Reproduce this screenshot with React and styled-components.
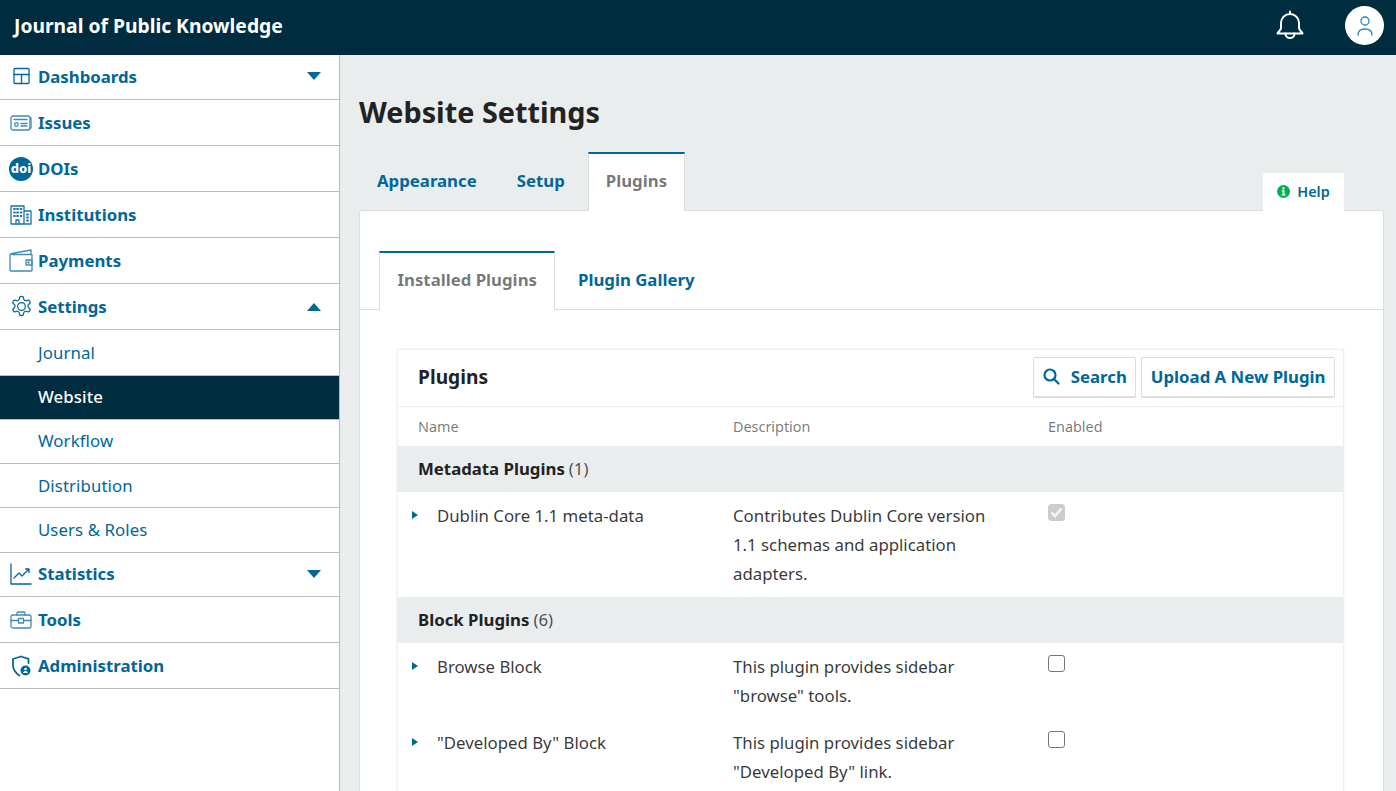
import React from 'react'
import styled, { createGlobalStyle } from 'styled-components'

const GlobalStyle = createGlobalStyle`
  html, body { margin: 0; padding: 0; height: 100%; overflow: hidden; }
  body { font-family: "Noto Sans", "Open Sans", sans-serif; background: #eaedee; color: rgba(0,0,0,.84); }
  * { box-sizing: border-box; }
`

const Page = styled.div`
  width: 1396px;
  height: 791px;
  display: flex;
  flex-direction: column;
  overflow: hidden;
`

const Header = styled.header`
  height: 55px;
  flex: none;
  background: #002c40;
  display: flex;
  align-items: center;
  justify-content: space-between;
  padding: 0 12px 0 14px;
  color: #fff;
`

const Brand = styled.div`
  font-size: 19.3px;
  font-weight: 700;
  position: relative;
  top: -2px;
`

const HeaderTools = styled.div`
  display: flex;
  align-items: center;
  gap: 40px;
  position: relative;
  top: -2px;
`

const Avatar = styled.div`
  width: 39px;
  height: 39px;
  border-radius: 50%;
  background: #fff;
  display: flex;
  align-items: center;
  justify-content: center;
`

const Body = styled.div`
  flex: 1;
  display: flex;
  min-height: 0;
`

const Sidebar = styled.nav`
  width: 340px;
  flex: none;
  background: #fff;
  border-right: 1px solid #bbb;
`

const NavRow = styled.div`
  height: ${p => p.$h || 46}px;
  border-bottom: 1px solid #bbb;
  display: flex;
  align-items: center;
  padding: 0 18px ${p => (p.$h ? 2 : 0)}px 10px;
  color: #006798;
  font-size: 16.8px;
  font-weight: 700;
  gap: 6px;
`

const SubRow = styled.div`
  height: ${p => p.$h || 44}px;
  border-bottom: 1px solid #bbb;
  display: flex;
  align-items: center;
  padding: 0 0 ${p => p.$lift || 0}px 38px;
  font-size: 16.8px;
  font-weight: ${p => (p.$active ? 500 : 400)};
  letter-spacing: 0.1px;
  color: ${p => (p.$active ? '#fff' : '#006798')};
  background: ${p => (p.$active ? '#002c40' : 'transparent')};
`

const NavIcon = styled.span`
  width: 22px;
  height: 24px;
  flex: none;
  display: flex;
  align-items: center;
  justify-content: center;
  svg { flex: none; }
`

const NavLabel = styled.span`
  flex: 1;
`

const Caret = styled.span`
  width: 0;
  height: 0;
  border-left: 7.5px solid transparent;
  border-right: 7.5px solid transparent;
  ${p => (p.$up ? 'border-bottom: 8px solid #006798;' : 'border-top: 8px solid #006798;')}
`

const Main = styled.main`
  flex: 1;
  min-width: 0;
  padding: 37px 12px 0 19px;
`

const Title = styled.h1`
  margin: 0 0 19px;
  height: 40px;
  font-size: 28.8px;
  line-height: 40px;
  font-weight: 700;
  color: #222;
`

const TabBar = styled.div`
  display: flex;
  align-items: flex-end;
  height: ${p => p.$h}px;
  padding-left: ${p => p.$inset || 1}px;
  ${p => p.$bordered && 'border-bottom: 1px solid #ddd;'}
`

const Tab = styled.div`
  height: 59px;
  padding: 0 ${p => p.$pad || 17}px ${p => (p.$active ? 4 : 2)}px;
  margin-bottom: -1px;
  display: flex;
  align-items: center;
  font-size: 16.8px;
  font-weight: 700;
  color: ${p => (p.$active ? 'rgba(0,0,0,.54)' : '#006798')};
  background: ${p => (p.$active ? '#fff' : 'transparent')};
  ${p => p.$active && `
    border: 1px solid #ddd;
    border-top: 2px solid #006798;
    border-bottom: 0;
  `}
  position: relative;
  z-index: 1;
`

const Help = styled.div`
  margin-left: auto;
  margin-right: 40px;
  margin-bottom: -1px;
  width: 81px;
  height: 38px;
  padding-bottom: 2px;
  background: #fff;
  border-radius: 2px 2px 0 0;
  display: flex;
  align-items: center;
  justify-content: center;
  gap: 7px;
  font-size: 14.4px;
  font-weight: 600;
  color: #006798;
  position: relative;
  z-index: 1;
`

const Panel = styled.section`
  background: #fff;
  border: 1px solid #ddd;
  border-radius: 2px;
  height: 620px;
  padding-top: 40px;
`

const Card = styled.div`
  margin: 39px 39px 0 37px;
  border: 1px solid #eee;
  border-bottom: 0;
  box-shadow: 0 0 2px rgba(0,0,0,.08);
`

const CardHead = styled.div`
  height: 57px;
  display: flex;
  align-items: center;
  justify-content: space-between;
  padding: 0 8px 2px 20px;
  border-bottom: 1px solid #eee;
`

const CardTitle = styled.div`
  font-size: 19.2px;
  font-weight: 700;
  color: #222;
  margin-top: -2px;
`

const Buttons = styled.div`
  display: flex;
  gap: 5px;
`

const Button = styled.div`
  height: 41px;
  padding: 0 8.5px;
  display: flex;
  align-items: center;
  gap: 11px;
  border: 1px solid #ddd;
  border-bottom-width: 2px;
  border-radius: 2px;
  background: #fff;
  color: #006798;
  font-size: 16.8px;
  font-weight: 700;
`

const Grid = styled.div`
  display: grid;
  grid-template-columns: 335px 315px 1fr;
`

const ColHead = styled.div`
  height: 39px;
  padding-left: ${p => (p.$first ? 20 : 0)}px;
  display: flex;
  align-items: center;
  font-size: 14.4px;
  color: rgba(0,0,0,.54);
`

const Group = styled.div`
  grid-column: 1 / -1;
  height: 46px;
  padding: 0 0 2px 20px;
  background: #eaedee;
  display: flex;
  align-items: center;
  font-size: 16.8px;
  color: #222;
  b { font-weight: 700; }
  span { margin-left: 4px; color: rgba(0,0,0,.7); }
`

const NameCell = styled.div`
  padding: 9px 0 0 14px;
  display: flex;
  gap: 19px;
  font-size: 16.8px;
  line-height: 29px;
  color: rgba(0,0,0,.8);
`

const Arrow = styled.span`
  width: 0;
  height: 0;
  margin-top: 10px;
  flex: none;
  border-top: 4px solid transparent;
  border-bottom: 4px solid transparent;
  border-left: 6px solid #006798;
`

const DescCell = styled.div`
  padding: 9px 40px 9px 0;
  font-size: 16.8px;
  line-height: 29px;
  color: rgba(0,0,0,.8);
`

const CheckCell = styled.div`
  padding: 12px 0 0 0;
`

const Check = styled.span`
  display: flex;
  width: 17px;
  height: 17px;
  border-radius: 3px;
  align-items: center;
  justify-content: center;
  background: ${p => (p.$on ? '#ccc' : '#fff')};
  border: 1px solid ${p => (p.$on ? '#ccc' : '#767676')};
`

const line = { fill: 'none', stroke: '#006798', strokeWidth: 1.3, strokeLinecap: 'round', strokeLinejoin: 'round' }

const icons = {
  dash: (
    <svg width="18" height="18" viewBox="0 0 18 18" {...line}>
      <rect x="2" y="1.500" width="15" height="15" rx="1" />
      <path d="M2 7.500h15M9.500 7.500v9" />
    </svg>
  ),
  issues: (
    <svg width="22" height="16" viewBox="0 0 22 16" {...line} opacity=".75">
      <rect x="1" y="1" width="19" height="14" rx="2" />
      <path d="M20 3h1v10h-1M4 4.500h13M11 8.500h6M11 11h6" />
      <circle cx="6.500" cy="9.500" r="1.800" />
    </svg>
  ),
  doi: (
    <svg width="24" height="24" viewBox="0 0 24 24">
      <circle cx="12" cy="12" r="12" fill="#006798" />
      <text x="12" y="16" textAnchor="middle" fontSize="13" fontWeight="800" fontFamily="Noto Sans" fill="#fff">doi</text>
    </svg>
  ),
  inst: (
    <svg width="22" height="20" viewBox="0 0 22 20" {...line} opacity=".9">
      <path d="M1 19V1h13v18H1zM14 6h7v13h-7" />
      <path d="M6 19v-4h3v4" />
      <path d="M4 4h1M7 4h1M10.500 4h1M4 7.500h1M7 7.500h1M10.500 7.500h1M4 11h1M7 11h1M10.500 11h1M17 9.500h1M17 12.500h1M17 15.500h1" strokeWidth="1.800" />
    </svg>
  ),
  pay: (
    <svg width="24" height="23" viewBox="0 0 24 23" {...line} opacity=".75">
      <path d="M1 6.500C1 5 2 4.500 3 4.500L22 1v4M1 6.500V21c0 .8.5 1 1 1h20.500c.3 0 .5-.3.5-.5V6c0-.3-.2-.5-.5-.5H3" />
      <rect x="17" y="11" width="6" height="5" />
      <circle cx="19.500" cy="13.500" r=".6" />
    </svg>
  ),
  gear: (
    <svg width="23" height="23" viewBox="0 0 24 24" {...line}>
      <circle cx="12" cy="12" r="4" />
      <path d="M12.200 1.500h-.4a2 2 0 0 0-2 2v.2a2 2 0 0 1-1 1.700l-.4.300a2 2 0 0 1-2 0l-.2-.1a2 2 0 0 0-2.700.700l-.2.400a2 2 0 0 0 .7 2.700l.2.100a2 2 0 0 1 1 1.700v.5a2 2 0 0 1-1 1.700l-.2.100a2 2 0 0 0-.7 2.700l.2.400a2 2 0 0 0 2.700.700l.2-.1a2 2 0 0 1 2 0l.4.300a2 2 0 0 1 1 1.700v.2a2 2 0 0 0 2 2h.4a2 2 0 0 0 2-2v-.2a2 2 0 0 1 1-1.700l.4-.3a2 2 0 0 1 2 0l.2.100a2 2 0 0 0 2.700-.7l.2-.4a2 2 0 0 0-.7-2.700l-.2-.1a2 2 0 0 1-1-1.700v-.5a2 2 0 0 1 1-1.700l.2-.1a2 2 0 0 0 .7-2.700l-.2-.4a2 2 0 0 0-2.700-.7l-.2.100a2 2 0 0 1-2 0l-.4-.3a2 2 0 0 1-1-1.700v-.2a2 2 0 0 0-2-2z" />
    </svg>
  ),
  stats: (
    <svg width="22" height="22" viewBox="0 0 22 22" {...line}>
      <path d="M1 1v20h20" />
      <path d="M4 15l5-5 3 3 7-7M15.500 6H19v3.500" />
    </svg>
  ),
  tools: (
    <svg width="22" height="18" viewBox="0 0 22 18" {...line} opacity=".75">
      <rect x="1" y="4" width="20" height="13" rx="2" />
      <path d="M7 4V2c0-.6.4-1 1-1h6c.6 0 1 .4 1 1v2M1 9.500h7M14 9.500h7" />
      <rect x="8.500" y="7.500" width="5" height="4.500" />
    </svg>
  ),
  admin: (
    <svg width="20" height="22" viewBox="0 0 20 22">
      <path d="M10 1.500L17.500 4v4M2 4l8-2.500M2 4v6c0 4.500 2.500 8 6.500 10.500" fill="none" stroke="#006798" strokeWidth="1.800" strokeLinecap="round" />
      <circle cx="14.500" cy="15.500" r="5" fill="#006798" />
      <circle cx="14.500" cy="14" r="1.300" fill="#fff" />
      <path d="M12 18c.5-1.500 1.500-2 2.500-2s2 .5 2.500 2z" fill="#fff" />
    </svg>
  ),
}

const Bell = () => (
  <svg width="30" height="31" viewBox="0 0 30 31" fill="none" stroke="#fff" strokeWidth="2" strokeLinecap="round" strokeLinejoin="round">
    <path d="M15 1.500v2.500" />
    <path d="M6 18V13a9 9 0 0 1 18 0v5c0 2 2.500 3.500 3.500 5.500h-25C3.500 21.500 6 20 6 18z" />
    <path d="M10.500 23.500a4.500 4.500 0 0 0 9 0" />
  </svg>
)

const UserIcon = () => (
  <svg width="18" height="22" viewBox="0 0 18 22" fill="none" stroke="#2c83b5" strokeWidth="1.300" strokeLinecap="round">
    <circle cx="9" cy="6" r="4" />
    <path d="M2 20c0-4 3-6 7-6s7 2 7 6" />
  </svg>
)

const InfoIcon = () => (
  <svg width="13" height="13" viewBox="0 0 13 13">
    <circle cx="6.500" cy="6.500" r="6.500" fill="#00b24e" />
    <rect x="5.500" y="2.300" width="2" height="2" fill="#fff" />
    <path d="M4.700 5.300h2.800v4h1v1.300H4.700V9.300h1V6.600h-1z" fill="#fff" />
  </svg>
)

const SearchIcon = () => (
  <svg width="17" height="17" viewBox="0 0 17 17" fill="none" stroke="#006798" strokeWidth="2.200" strokeLinecap="round">
    <circle cx="7" cy="7" r="5.500" />
    <path d="M11 11l4.500 4.500" />
  </svg>
)

const Tick = () => (
  <svg width="13" height="11" viewBox="0 0 13 11" fill="none" stroke="#f4f4f4" strokeWidth="2.600">
    <path d="M1.500 5.500l3.500 3.500 6.500-7.500" />
  </svg>
)

const topNav = [
  { label: 'Dashboards', icon: 'dash', caret: 'down', h: 45 },
  { label: 'Issues', icon: 'issues' },
  { label: 'DOIs', icon: 'doi' },
  { label: 'Institutions', icon: 'inst' },
  { label: 'Payments', icon: 'pay' },
  { label: 'Settings', icon: 'gear', caret: 'up' },
]

const subNav = [
  { label: 'Journal', h: 46 },
  { label: 'Website', active: true, h: 44, lift: 2 },
  { label: 'Workflow', h: 44, lift: 2 },
  { label: 'Distribution', h: 44 },
  { label: 'Users & Roles', h: 45, lift: 2 },
]

const bottomNav = [
  { label: 'Statistics', icon: 'stats', caret: 'down', h: 44 },
  { label: 'Tools', icon: 'tools' },
  { label: 'Administration', icon: 'admin' },
]

const NavItem = ({ item }) => (
  <NavRow $h={item.h}>
    <NavIcon>{icons[item.icon]}</NavIcon>
    <NavLabel>{item.label}</NavLabel>
    {item.caret && <Caret $up={item.caret === 'up'} />}
  </NavRow>
)

const Plugin = ({ name, desc, on }) => (
  <>
    <NameCell><Arrow />{name}</NameCell>
    <DescCell>{desc}</DescCell>
    <CheckCell><Check $on={on}>{on && <Tick />}</Check></CheckCell>
  </>
)

export default function App() {
  return (
    <Page>
      <GlobalStyle />
      <Header>
        <Brand>Journal of Public Knowledge</Brand>
        <HeaderTools>
          <Bell />
          <Avatar><UserIcon /></Avatar>
        </HeaderTools>
      </Header>
      <Body>
        <Sidebar>
          {topNav.map(item => <NavItem key={item.label} item={item} />)}
          {subNav.map(item => (
            <SubRow key={item.label} $active={item.active} $h={item.h} $lift={item.lift}>{item.label}</SubRow>
          ))}
          {bottomNav.map(item => <NavItem key={item.label} item={item} />)}
        </Sidebar>
        <Main>
          <Title>Website Settings</Title>
          <TabBar $h={59}>
            <Tab>Appearance</Tab>
            <Tab $pad={23}>Setup</Tab>
            <Tab $active>Plugins</Tab>
            <Help><InfoIcon />Help</Help>
          </TabBar>
          <Panel>
            <TabBar $h={59} $inset={19} $bordered>
              <Tab $active $pad={17.5}>Installed Plugins</Tab>
              <Tab $pad={22.5}>Plugin Gallery</Tab>
            </TabBar>
            <Card>
              <CardHead>
                <CardTitle>Plugins</CardTitle>
                <Buttons>
                  <Button><SearchIcon />Search</Button>
                  <Button>Upload A New Plugin</Button>
                </Buttons>
              </CardHead>
              <Grid>
                <ColHead $first>Name</ColHead>
                <ColHead>Description</ColHead>
                <ColHead>Enabled</ColHead>
                <Group><b>Metadata Plugins</b><span>(1)</span></Group>
                <Plugin name="Dublin Core 1.1 meta-data" desc="Contributes Dublin Core version 1.1 schemas and application adapters." on />
                <Group><b>Block Plugins</b><span>(6)</span></Group>
                <Plugin name="Browse Block" desc={'This plugin provides sidebar "browse" tools.'} />
                <Plugin name={'"Developed By" Block'} desc={'This plugin provides sidebar "Developed By" link.'} />
              </Grid>
            </Card>
          </Panel>
        </Main>
      </Body>
    </Page>
  )
}
